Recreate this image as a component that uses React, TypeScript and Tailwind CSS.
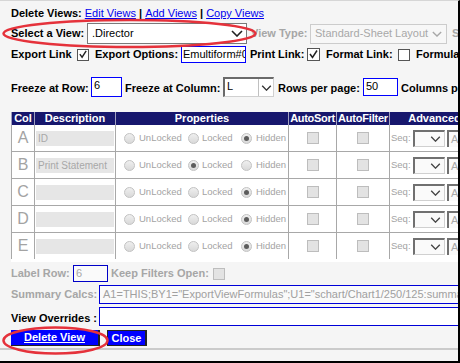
import React from "react";

const Chevron = ({ c = "#222", w = 12, h = 7 }: { c?: string; w?: number; h?: number }) => (
  <svg width={w} height={h} viewBox="0 0 12 7">
    <polyline points="1,1 6,6 11,1" fill="none" stroke={c} strokeWidth="1.6" />
  </svg>
);

const Check = () => (
  <svg width="11" height="11" viewBox="0 0 11 11">
    <polyline points="2,5 4.5,8.5 9,1.5" fill="none" stroke="#222" strokeWidth="1.5" />
  </svg>
);

function Radio({ on }: { on?: boolean }) {
  return (
    <div className="w-[11px] h-[11px] shrink-0 rounded-full border border-[#c2c2c2] bg-gradient-to-b from-[#efefef] to-[#d9d9d9] flex items-center justify-center">
      {on && <div className="w-[5px] h-[5px] rounded-full bg-[#5c5c5c]" />}
    </div>
  );
}

function GrayBox() {
  return <div className="w-[12px] h-[12px] bg-[#e3e3e3] border border-[#bdbdbd]" />;
}

function Row({ label, desc, sel, last }: { label: string; desc: string; sel: number; last?: boolean }) {
  const cell = "shrink-0 border-l border-[#a8a8a8] flex items-center";
  return (
    <div className={`flex bg-white ${last ? "h-[29px] pb-[3px]" : "h-[27px] border-b border-[#a8a8a8]"}`}>
      <div className={`${cell} w-[23px] justify-center text-[16px] text-[#a3a3a3]`}>{label}</div>
      <div className={`${cell} w-[81px] px-[1px]`}>
        <div className="w-full h-[15px] bg-[#e6e6e6] text-[10px] leading-[15px] text-[#a8a8a8] pl-[2px] whitespace-nowrap overflow-hidden">
          {desc}
        </div>
      </div>
      <div className={`${cell} w-[173px] pl-[8px] text-[9.5px] text-[#a3a3a3]`}>
        <div className="w-[64px] flex items-center shrink-0">
          <Radio on={sel === 0} />
          <span className="ml-[4px]">UnLocked</span>
        </div>
        <div className="w-[53px] flex items-center shrink-0">
          <Radio on={sel === 1} />
          <span className="ml-[3px]">Locked</span>
        </div>
        <div className="flex items-center shrink-0">
          <Radio on={sel === 2} />
          <span className="ml-[4px]">Hidden</span>
        </div>
      </div>
      <div className={`${cell} w-[48px] justify-center`}>
        <GrayBox />
      </div>
      <div className={`${cell} w-[53px] justify-center`}>
        <GrayBox />
      </div>
      <div className={`${cell} w-[90px] pl-[1px]`}>
        <span className="w-[22px] shrink-0 text-[9.5px] text-[#a3a3a3]">Seq:</span>
        <div className="w-[32px] h-[17px] shrink-0 border-t-2 border-l-2 border-[#707070] border-r border-b border-r-[#d0d0d0] border-b-[#d0d0d0] bg-[#fafafa] flex items-center justify-end pr-[3px]">
          <Chevron c="#444" w={11} h={6} />
        </div>
        <div className="ml-[2px] w-[40px] h-[17px] shrink-0 border-t-2 border-l-2 border-[#707070] bg-[#fafafa] text-[11px] text-[#a8a8a8] pl-[2px] leading-[14px]">
          A
        </div>
      </div>
    </div>
  );
}

export default function App() {
  const gray = "text-[#a6a6a6]";
  return (
    <div className="relative w-[460px] h-[363px] overflow-hidden bg-[#f5f5f5] border-t border-t-[#d6d6d6] border-r-2 border-r-black border-b-2 border-b-black font-['Liberation_Sans',Arial,sans-serif] text-[11px] text-black">
      <div className="pl-[11px]">
        {/* Row 1 */}
        <div className="h-[21px] pt-[6px] leading-[13px] whitespace-nowrap">
          <span className="font-bold">Delete Views: </span>
          <span className="text-[#0000ee] underline">Edit Views</span>
          <span className="font-bold"> | </span>
          <span className="text-[#0000ee] underline">Add Views</span>
          <span className="font-bold"> | </span>
          <span className="text-[#0000ee] underline">Copy Views</span>
        </div>

        {/* Row 2 */}
        <div className="mt-[1px] h-[21px] flex items-center whitespace-nowrap">
          <span className="w-[76px] shrink-0 font-bold">Select a View:</span>
          <div className="w-[160px] h-[21px] shrink-0 bg-white border border-[#7a7a7a] flex items-center justify-between pl-[4px] pr-[3px]">
            <span>.Director</span>
            <Chevron />
          </div>
          <span className={`ml-[4px] w-[59px] shrink-0 font-bold ${gray}`}>View Type:</span>
          <div className="w-[137px] h-[20px] shrink-0 bg-[#f7f7f7] border border-[#cccccc] flex items-center justify-between pl-[4px] pr-[4px] text-[#a8a8a8]">
            <span>Standard-Sheet Layout</span>
            <Chevron c="#a8a8a8" w={10} h={6} />
          </div>
          <span className={`ml-[5px] font-bold ${gray}`}>S</span>
        </div>

        {/* Row 3 */}
        <div className="mt-[2px] h-[17px] flex items-center whitespace-nowrap font-bold">
          <span className="w-[66px] shrink-0">Export Link</span>
          <div className="w-[12px] h-[12px] shrink-0 bg-white border border-[#555] flex items-center justify-center">
            <Check />
          </div>
          <span className="ml-[6px] w-[86px] shrink-0">Export Options:</span>
          <div className="w-[65px] h-[17px] shrink-0 bg-white border border-[#0000ff] overflow-hidden font-normal pl-[1px] leading-[15px]">
            Emultiform#0
          </div>
          <span className="ml-[4px] w-[57px] shrink-0">Print Link:</span>
          <div className="w-[13px] h-[13px] shrink-0 bg-white border border-[#555] flex items-center justify-center">
            <Check />
          </div>
          <span className="ml-[6px] w-[72px] shrink-0">Format Link:</span>
          <div className="w-[12px] h-[12px] shrink-0 bg-white border border-[#555]" />
          <span className="ml-[6px]">Formula</span>
        </div>

        {/* Row 4 */}
        <div className="mt-[14px] h-[20px] flex items-center whitespace-nowrap font-bold">
          <span className="w-[80px] shrink-0 pt-[2px]">Freeze at Row:</span>
          <div className="w-[31px] h-[20px] shrink-0 bg-white border border-[#0000ff] font-normal pl-[2px] leading-[13px] pt-[1px]">
            6
          </div>
          <span className="ml-[3px] w-[98px] shrink-0 pt-[2px]">Freeze at Column:</span>
          <div className="w-[51px] h-[20px] shrink-0 bg-white border-t-2 border-l-2 border-[#6a6a6a] border-r border-b border-r-[#d0d0d0] border-b-[#d0d0d0] flex items-start font-normal">
            <span className="pl-[2px] pt-[1px] leading-[13px] flex-1">L</span>
            <div className="w-[15px] h-full border-l border-[#c0c0c0] flex items-center justify-center">
              <Chevron c="#333" w={11} h={6} />
            </div>
          </div>
          <span className="ml-[4px] w-[85px] shrink-0 pt-[2px]">Rows per page:</span>
          <div className="w-[35px] h-[18px] shrink-0 bg-white border border-[#0000ff] font-normal pl-[2px] leading-[13px] pt-[1px]">
            50
          </div>
          <span className="ml-[3px] pt-[2px]">Columns per page</span>
        </div>

        {/* Table */}
        <div className="mt-[15px] w-[470px]">
          <div className="flex h-[13px] bg-[#17176d] text-white font-bold text-[11px] leading-[13px]">
            <div className="w-[23px] shrink-0 border-l border-[#a0a0c0] text-center">Col</div>
            <div className="w-[81px] shrink-0 border-l border-[#a0a0c0] text-center">Description</div>
            <div className="w-[173px] shrink-0 border-l border-[#a0a0c0] text-center">Properties</div>
            <div className="w-[48px] shrink-0 border-l border-[#a0a0c0] text-center whitespace-nowrap tracking-[-0.3px]">AutoSort</div>
            <div className="w-[53px] shrink-0 border-l border-[#a0a0c0] text-center whitespace-nowrap tracking-[-0.2px]">AutoFilter</div>
            <div className="w-[90px] shrink-0 border-l border-[#a0a0c0] text-center">Advanced</div>
          </div>
          <Row label="A" desc="ID" sel={2} />
          <Row label="B" desc="Print Statement" sel={1} />
          <Row label="C" desc="" sel={2} />
          <Row label="D" desc="" sel={2} />
          <Row label="E" desc="" sel={2} last />
        </div>

        {/* Label row */}
        <div className={`mt-[3px] h-[17px] flex items-center whitespace-nowrap font-bold ${gray}`}>
          <span className="w-[62px] shrink-0">Label Row:</span>
          <div className="w-[35px] h-[17px] shrink-0 bg-[#fafafa] border border-[#0000c8] font-normal pl-[2px] leading-[15px]">
            6
          </div>
          <span className="ml-[3px] w-[102px] shrink-0">Keep Filters Open:</span>
          <GrayBox />
        </div>

        {/* Summary */}
        <div className={`mt-[3px] h-[19px] flex items-center whitespace-nowrap font-bold ${gray}`}>
          <span className="w-[88px] shrink-0">Summary Calcs:</span>
          <div className="w-[380px] h-[19px] shrink-0 bg-[#fafafa] border border-[#0000d8] font-normal pl-[3px] leading-[17px] text-[#a0a0a0] overflow-hidden">
            A1=THIS;BY1="ExportViewFormulas";U1="schart/Chart1/250/125:summary"
          </div>
        </div>

        {/* Overrides */}
        <div className="mt-[3px] h-[19px] flex items-center whitespace-nowrap font-bold">
          <span className="w-[88px] shrink-0 pt-[4px]">View Overrides :</span>
          <div className="w-[380px] h-[19px] shrink-0 bg-white border border-[#0000d8]" />
        </div>

        {/* Buttons */}
        <div className="mt-[4px] h-[16px] flex items-center font-bold text-white">
          <div className="w-[89px] h-[16px] shrink-0 bg-[#0000ff] border-r-2 border-b border-[#222] text-center leading-[15px] underline">
            Delete View
          </div>
          <div className="ml-[7px] w-[40px] h-[16px] shrink-0 bg-[#0000ff] border border-[#222] border-r-2 text-center leading-[14px]">
            Close
          </div>
        </div>
      </div>

      <div className="mt-[2px] h-[2px] bg-[#cbcbcb]" />

      {/* Red highlight ellipses */}
      <svg className="absolute left-0 top-0 pointer-events-none" width="460" height="363">
        <ellipse cx="129.5" cy="32.5" rx="126" ry="13.5" fill="none" stroke="#e5323b" strokeWidth="2.5" />
        <ellipse cx="55.5" cy="339.5" rx="52" ry="13" fill="none" stroke="#e5323b" strokeWidth="2.5" />
      </svg>
    </div>
  );
}
